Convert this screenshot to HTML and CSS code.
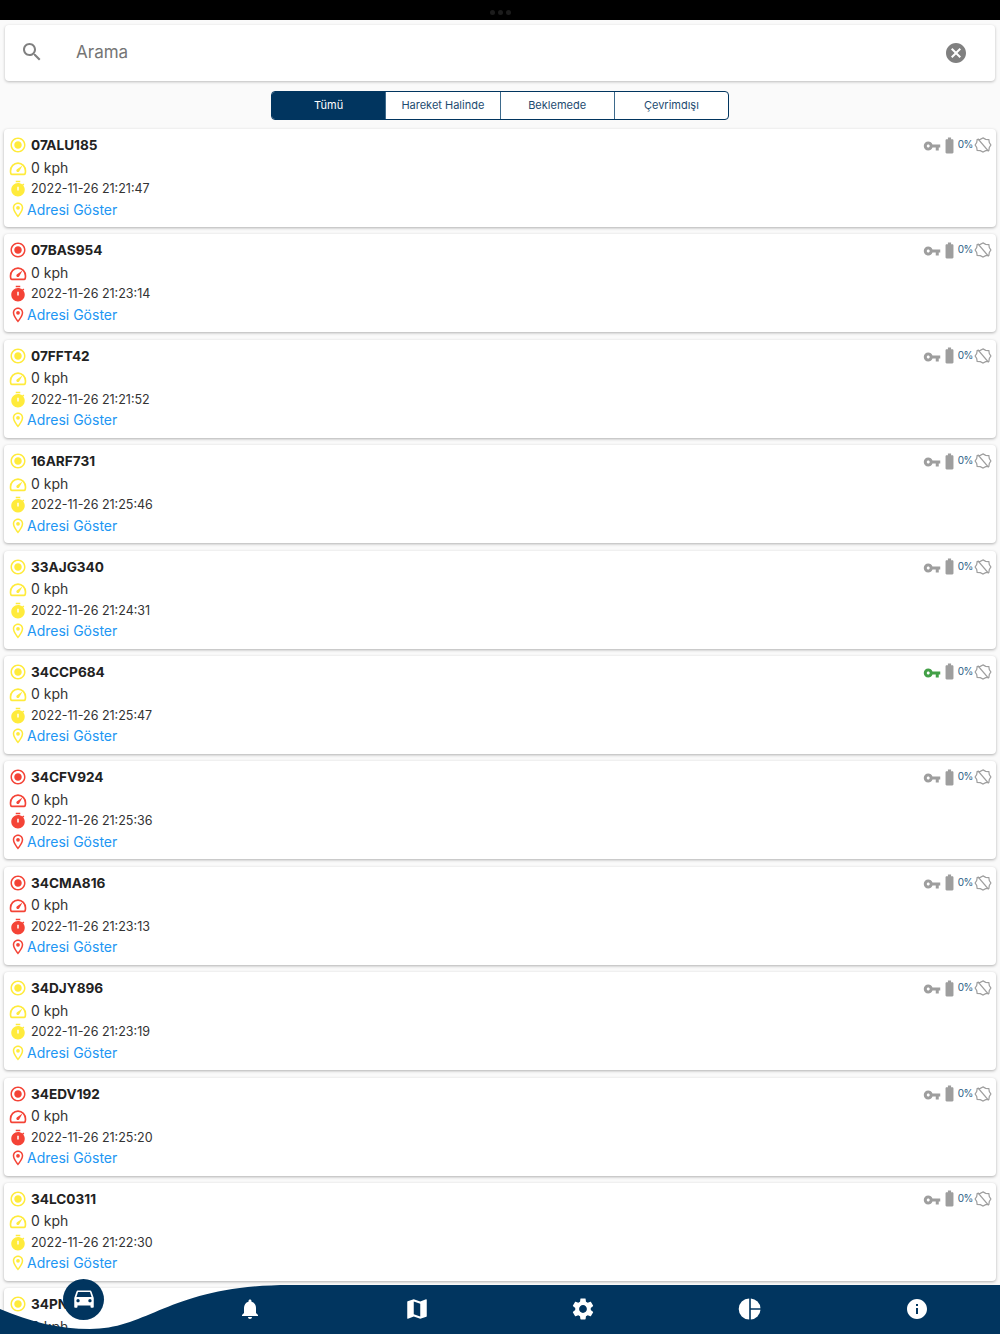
FILE: index.html
```html
<!DOCTYPE html>
<html lang="en">

<head>
    <meta charset="UTF-8">
    <meta name="viewport" content="width=device-width, initial-scale=1.0">
    <title>Araçlar</title>
    <link rel="stylesheet" href="styles.css">
</head>

<body>
    <svg class="sprite" xmlns="http://www.w3.org/2000/svg">
        <symbol id="i-search" viewBox="0 0 24 24"><path d="M15.5 14h-.79l-.28-.27C15.41 12.59 16 11.11 16 9.5 16 5.91 13.09 3 9.5 3S3 5.91 3 9.5 5.91 16 9.5 16c1.61 0 3.09-.59 4.23-1.57l.27.28v.79l5 4.99L20.49 19l-4.99-5zm-6 0C7.01 14 5 11.99 5 9.5S7.01 5 9.5 5 14 7.01 14 9.5 11.99 14 9.5 14z"/></symbol>
        <symbol id="i-cancel" viewBox="0 0 24 24"><path d="M12 2C6.47 2 2 6.47 2 12s4.47 10 10 10 10-4.47 10-10S17.53 2 12 2zm5 13.59L15.59 17 12 13.41 8.41 17 7 15.59 10.59 12 7 8.41 8.41 7 12 10.59 15.59 7 17 8.41 13.41 12 17 15.59z"/></symbol>
        <symbol id="i-status" viewBox="0 0 24 24"><path d="M12 7c-2.76 0-5 2.24-5 5s2.24 5 5 5 5-2.24 5-5-2.24-5-5-5zm0-5C6.48 2 2 6.48 2 12s4.48 10 10 10 10-4.48 10-10S17.52 2 12 2zm0 18c-4.42 0-8-3.58-8-8s3.58-8 8-8 8 3.58 8 8-3.58 8-8 8z"/></symbol>
        <symbol id="i-speed" viewBox="0 0 24 24"><path d="M4 20.500h16c.8 0 1.300-.4 1.500-1 .4-1.200.5-2.400.5-3.500 0-5.800-4.500-10.500-10-10.500S2 10.200 2 16c0 1.100.1 2.300.5 3.500.2.600.7 1 1.500 1z" fill="none" stroke="currentColor" stroke-width="2.200"/><path d="M18 8.500l-7.300 5.200c-1 .7-1.200 2-.5 2.900.7 1 2 1.100 2.900.4.300-.2.500-.5.600-.8z"/></symbol>
        <symbol id="i-timer" viewBox="0 0 24 24"><path d="M15 1H9v2h6V1z"/><path d="M19.030 7.390l1.420-1.420c-.43-.51-.9-.99-1.410-1.410l-1.420 1.420C16.070 4.740 14.120 4 12 4c-4.970 0-9 4.030-9 9s4.020 9 9 9 9-4.030 9-9c0-2.120-.74-4.070-1.970-5.610zM13 14h-2V9h2v5z"/></symbol>
        <symbol id="i-place" viewBox="0 0 24 24"><path d="M12 2C8.130 2 5 5.130 5 9c0 5.250 7 13 7 13s7-7.750 7-13c0-3.870-3.130-7-7-7zM7 9c0-2.760 2.240-5 5-5s5 2.240 5 5c0 2.880-2.880 7.190-5 9.880C9.920 16.210 7 11.850 7 9z"/><circle cx="12" cy="9" r="2.500"/></symbol>
        <symbol id="i-key" viewBox="0 0 24 24"><path d="M12.650 10C11.830 7.670 9.610 6 7 6c-3.310 0-6 2.690-6 6s2.690 6 6 6c2.610 0 4.830-1.670 5.650-4H17v4h4v-4h2v-4H12.650zM7 14c-1.100 0-2-.9-2-2s.9-2 2-2 2 .9 2 2-.9 2-2 2z"/></symbol>
        <symbol id="i-battery" viewBox="0 0 24 24"><path d="M15.670 4H14V2h-4v2H8.330C7.600 4 7 4.600 7 5.330v15.330C7 21.400 7.600 22 8.330 22h7.330c.74 0 1.340-.6 1.340-1.330V5.330C17 4.600 16.400 4 15.670 4z"/></symbol>
        <symbol id="i-off" viewBox="0 0 24 24"><path d="M12 2.500l3.600 2 4.200.3.600 4 2.100 3.200-2.100 3.400-.6 3.800-4.200.3-3.600 2-3.600-2-4.200-.3-.6-3.800L1.500 12l2.100-3.200.6-4 4.200-.3z" fill="none" stroke="currentColor" stroke-width="1.600"/><path d="M5 3.500l14.500 17" fill="none" stroke="currentColor" stroke-width="1.800"/></symbol>
        <symbol id="i-car" viewBox="0 0 24 24"><path d="M18.920 6.010C18.720 5.420 18.160 5 17.500 5h-11c-.66 0-1.210.42-1.420 1.010L3 12v8c0 .55.45 1 1 1h1c.55 0 1-.45 1-1v-1h12v1c0 .55.45 1 1 1h1c.55 0 1-.45 1-1v-8l-2.080-5.990zM6.500 16c-.83 0-1.500-.67-1.500-1.500S5.670 13 6.500 13s1.500.67 1.500 1.500S7.330 16 6.500 16zm11 0c-.83 0-1.500-.67-1.500-1.500s.67-1.500 1.500-1.500 1.500.67 1.500 1.500-.67 1.500-1.500 1.500zM5 11l1.500-4.500h11L19 11H5z"/></symbol>
        <symbol id="i-bell" viewBox="0 0 24 24"><path d="M12 22c1.100 0 2-.9 2-2h-4c0 1.100.89 2 2 2zm6-6v-5c0-3.070-1.640-5.640-4.500-6.320V4c0-.83-.67-1.500-1.500-1.500s-1.500.67-1.500 1.500v.68C7.630 5.360 6 7.920 6 11v5l-2 2v1h16v-1l-2-2z"/></symbol>
        <symbol id="i-map" viewBox="0 0 24 24"><path d="M20.500 3l-.16.03L15 5.100 9 3 3.360 4.900c-.21.07-.36.25-.36.48V20.500c0 .28.22.5.5.5l.16-.03L9 18.900l6 2.100 5.640-1.900c.21-.07.36-.25.36-.48V3.500c0-.28-.22-.5-.5-.5zM15 19l-6-2.110V5l6 2.110V19z"/></symbol>
        <symbol id="i-gear" viewBox="0 0 24 24"><path d="M19.140 12.940c.04-.3.06-.61.06-.94 0-.32-.02-.64-.07-.94l2.030-1.580c.18-.14.23-.41.12-.61l-1.920-3.320c-.12-.22-.37-.29-.59-.22l-2.390.96c-.5-.38-1.030-.7-1.620-.94l-.36-2.540c-.04-.24-.24-.41-.48-.41h-3.840c-.24 0-.43.17-.47.41l-.36 2.540c-.59.24-1.130.57-1.620.94l-2.390-.96c-.22-.08-.47 0-.59.22L2.740 8.870c-.12.21-.08.47.12.61l2.030 1.580c-.05.3-.09.63-.09.94s.02.64.07.94l-2.030 1.580c-.18.14-.23.41-.12.61l1.920 3.320c.12.22.37.29.59.22l2.390-.96c.5.38 1.030.7 1.620.94l.36 2.540c.05.24.24.41.48.41h3.840c.24 0 .44-.17.47-.41l.36-2.540c.59-.24 1.130-.56 1.620-.94l2.390.96c.22.08.47 0 .59-.22l1.920-3.320c.12-.22.07-.47-.12-.61l-2.010-1.580zM12 15.600c-1.980 0-3.600-1.620-3.600-3.600s1.620-3.600 3.600-3.600 3.600 1.620 3.600 3.600-1.620 3.600-3.600 3.600z"/></symbol>
        <symbol id="i-pie" viewBox="0 0 24 24"><path d="M11.200 1.500a10.500 10.500 0 0 0 0 21z"/><path d="M12.800 1.500a10.500 10.500 0 0 1 9.700 9.700h-9.700z"/><path d="M12.800 12.800h9.700a10.500 10.500 0 0 1-9.700 9.700z"/></symbol>
        <symbol id="i-info" viewBox="0 0 24 24"><path d="M12 2C6.480 2 2 6.480 2 12s4.480 10 10 10 10-4.480 10-10S17.520 2 12 2zm1 15h-2v-6h2v6zm0-8h-2V7h2v2z"/></symbol>
    </svg>

    <div class="top-bar"><span></span><span></span><span></span></div>

    <div class="search-box">
        <svg class="search-icon"><use href="#i-search"/></svg>
        <span class="search-text">Arama</span>
        <svg class="clear-icon"><use href="#i-cancel"/></svg>
    </div>

    <div class="tabs">
        <div class="tab active">Tümü</div>
        <div class="tab">Hareket Halinde</div>
        <div class="tab">Beklemede</div>
        <div class="tab">Çevrimdışı</div>
    </div>

    <div class="list">
        <div class="card idle">
            <div class="info">
                <div class="row name"><svg class="ico"><use href="#i-status"/></svg>07ALU185</div>
                <div class="row speed"><svg class="ico"><use href="#i-speed"/></svg>0 kph</div>
                <div class="row time"><svg class="ico"><use href="#i-timer"/></svg>2022-11-26 21:21:47</div>
                <div class="row addr"><svg class="pin"><use href="#i-place"/></svg>Adresi Göster</div>
            </div>
            <div class="state"><svg class="key"><use href="#i-key"/></svg><svg class="bat"><use href="#i-battery"/></svg><span class="pct">0%</span><svg class="off"><use href="#i-off"/></svg></div>
        </div>
        <div class="card stopped">
            <div class="info">
                <div class="row name"><svg class="ico"><use href="#i-status"/></svg>07BAS954</div>
                <div class="row speed"><svg class="ico"><use href="#i-speed"/></svg>0 kph</div>
                <div class="row time"><svg class="ico"><use href="#i-timer"/></svg>2022-11-26 21:23:14</div>
                <div class="row addr"><svg class="pin"><use href="#i-place"/></svg>Adresi Göster</div>
            </div>
            <div class="state"><svg class="key"><use href="#i-key"/></svg><svg class="bat"><use href="#i-battery"/></svg><span class="pct">0%</span><svg class="off"><use href="#i-off"/></svg></div>
        </div>
        <div class="card idle">
            <div class="info">
                <div class="row name"><svg class="ico"><use href="#i-status"/></svg>07FFT42</div>
                <div class="row speed"><svg class="ico"><use href="#i-speed"/></svg>0 kph</div>
                <div class="row time"><svg class="ico"><use href="#i-timer"/></svg>2022-11-26 21:21:52</div>
                <div class="row addr"><svg class="pin"><use href="#i-place"/></svg>Adresi Göster</div>
            </div>
            <div class="state"><svg class="key"><use href="#i-key"/></svg><svg class="bat"><use href="#i-battery"/></svg><span class="pct">0%</span><svg class="off"><use href="#i-off"/></svg></div>
        </div>
        <div class="card idle">
            <div class="info">
                <div class="row name"><svg class="ico"><use href="#i-status"/></svg>16ARF731</div>
                <div class="row speed"><svg class="ico"><use href="#i-speed"/></svg>0 kph</div>
                <div class="row time"><svg class="ico"><use href="#i-timer"/></svg>2022-11-26 21:25:46</div>
                <div class="row addr"><svg class="pin"><use href="#i-place"/></svg>Adresi Göster</div>
            </div>
            <div class="state"><svg class="key"><use href="#i-key"/></svg><svg class="bat"><use href="#i-battery"/></svg><span class="pct">0%</span><svg class="off"><use href="#i-off"/></svg></div>
        </div>
        <div class="card idle">
            <div class="info">
                <div class="row name"><svg class="ico"><use href="#i-status"/></svg>33AJG340</div>
                <div class="row speed"><svg class="ico"><use href="#i-speed"/></svg>0 kph</div>
                <div class="row time"><svg class="ico"><use href="#i-timer"/></svg>2022-11-26 21:24:31</div>
                <div class="row addr"><svg class="pin"><use href="#i-place"/></svg>Adresi Göster</div>
            </div>
            <div class="state"><svg class="key"><use href="#i-key"/></svg><svg class="bat"><use href="#i-battery"/></svg><span class="pct">0%</span><svg class="off"><use href="#i-off"/></svg></div>
        </div>
        <div class="card idle">
            <div class="info">
                <div class="row name"><svg class="ico"><use href="#i-status"/></svg>34CCP684</div>
                <div class="row speed"><svg class="ico"><use href="#i-speed"/></svg>0 kph</div>
                <div class="row time"><svg class="ico"><use href="#i-timer"/></svg>2022-11-26 21:25:47</div>
                <div class="row addr"><svg class="pin"><use href="#i-place"/></svg>Adresi Göster</div>
            </div>
            <div class="state"><svg class="key on"><use href="#i-key"/></svg><svg class="bat"><use href="#i-battery"/></svg><span class="pct">0%</span><svg class="off"><use href="#i-off"/></svg></div>
        </div>
        <div class="card stopped">
            <div class="info">
                <div class="row name"><svg class="ico"><use href="#i-status"/></svg>34CFV924</div>
                <div class="row speed"><svg class="ico"><use href="#i-speed"/></svg>0 kph</div>
                <div class="row time"><svg class="ico"><use href="#i-timer"/></svg>2022-11-26 21:25:36</div>
                <div class="row addr"><svg class="pin"><use href="#i-place"/></svg>Adresi Göster</div>
            </div>
            <div class="state"><svg class="key"><use href="#i-key"/></svg><svg class="bat"><use href="#i-battery"/></svg><span class="pct">0%</span><svg class="off"><use href="#i-off"/></svg></div>
        </div>
        <div class="card stopped">
            <div class="info">
                <div class="row name"><svg class="ico"><use href="#i-status"/></svg>34CMA816</div>
                <div class="row speed"><svg class="ico"><use href="#i-speed"/></svg>0 kph</div>
                <div class="row time"><svg class="ico"><use href="#i-timer"/></svg>2022-11-26 21:23:13</div>
                <div class="row addr"><svg class="pin"><use href="#i-place"/></svg>Adresi Göster</div>
            </div>
            <div class="state"><svg class="key"><use href="#i-key"/></svg><svg class="bat"><use href="#i-battery"/></svg><span class="pct">0%</span><svg class="off"><use href="#i-off"/></svg></div>
        </div>
        <div class="card idle">
            <div class="info">
                <div class="row name"><svg class="ico"><use href="#i-status"/></svg>34DJY896</div>
                <div class="row speed"><svg class="ico"><use href="#i-speed"/></svg>0 kph</div>
                <div class="row time"><svg class="ico"><use href="#i-timer"/></svg>2022-11-26 21:23:19</div>
                <div class="row addr"><svg class="pin"><use href="#i-place"/></svg>Adresi Göster</div>
            </div>
            <div class="state"><svg class="key"><use href="#i-key"/></svg><svg class="bat"><use href="#i-battery"/></svg><span class="pct">0%</span><svg class="off"><use href="#i-off"/></svg></div>
        </div>
        <div class="card stopped">
            <div class="info">
                <div class="row name"><svg class="ico"><use href="#i-status"/></svg>34EDV192</div>
                <div class="row speed"><svg class="ico"><use href="#i-speed"/></svg>0 kph</div>
                <div class="row time"><svg class="ico"><use href="#i-timer"/></svg>2022-11-26 21:25:20</div>
                <div class="row addr"><svg class="pin"><use href="#i-place"/></svg>Adresi Göster</div>
            </div>
            <div class="state"><svg class="key"><use href="#i-key"/></svg><svg class="bat"><use href="#i-battery"/></svg><span class="pct">0%</span><svg class="off"><use href="#i-off"/></svg></div>
        </div>
        <div class="card idle">
            <div class="info">
                <div class="row name"><svg class="ico"><use href="#i-status"/></svg>34LC0311</div>
                <div class="row speed"><svg class="ico"><use href="#i-speed"/></svg>0 kph</div>
                <div class="row time"><svg class="ico"><use href="#i-timer"/></svg>2022-11-26 21:22:30</div>
                <div class="row addr"><svg class="pin"><use href="#i-place"/></svg>Adresi Göster</div>
            </div>
            <div class="state"><svg class="key"><use href="#i-key"/></svg><svg class="bat"><use href="#i-battery"/></svg><span class="pct">0%</span><svg class="off"><use href="#i-off"/></svg></div>
        </div>
        <div class="card idle">
            <div class="info">
                <div class="row name"><svg class="ico"><use href="#i-status"/></svg>34PN</div>
                <div class="row speed"><svg class="ico"><use href="#i-speed"/></svg>0 kph</div>
            </div>
        </div>
    </div>

    <nav class="bottom-nav">
        <svg class="wave" viewBox="0 0 1000 49" preserveAspectRatio="none">
            <path d="M0 24C30 37 60 44 90 44C150 44 170 0 290 0L1000 0L1000 49L0 49Z"/>
        </svg>
        <div class="fab"><svg><use href="#i-car"/></svg></div>
        <div class="nav-icons">
            <span></span>
            <svg class="nav-bell"><use href="#i-bell"/></svg>
            <svg class="nav-map"><use href="#i-map"/></svg>
            <svg class="nav-gear"><use href="#i-gear"/></svg>
            <svg class="nav-pie"><use href="#i-pie"/></svg>
            <svg class="nav-info"><use href="#i-info"/></svg>
        </div>
    </nav>
</body>

</html>
```

FILE: styles.css
```css
html, body {
    height: 100%;
}

body {
    margin: 0;
    width: 1000px;
    height: 1334px;
    overflow: hidden;
    position: relative;
    background-color: #fafafa;
    font-family: Inter, "Open Sans", sans-serif;
    color: #222;
}

.sprite {
    display: none;
}

.top-bar {
    height: 20px;
    padding-top: 4px;
    box-sizing: border-box;
    background-color: #000;
    display: flex;
    justify-content: center;
    align-items: center;
    gap: 3px;
}

.top-bar span {
    width: 5px;
    height: 5px;
    border-radius: 50%;
    background-color: #1c1c1c;
}

.search-box {
    margin: 5px 5px 0;
    height: 56px;
    background-color: #fff;
    border-radius: 4px;
    box-shadow: 0 1px 3px rgba(0, 0, 0, 0.25);
    display: flex;
    align-items: center;
    padding: 0 27px 0 15px;
}

.search-icon {
    width: 24px;
    height: 24px;
    fill: #808080;
    margin-top: -3px;
}

.search-text {
    margin-left: 32px;
    margin-top: -2px;
    font-size: 17px;
    color: #757575;
    flex: 1;
}

.clear-icon {
    width: 24px;
    height: 24px;
    fill: #808080;
}

.tabs {
    margin: 10px auto 0;
    width: 458px;
    height: 29px;
    box-sizing: border-box;
    display: flex;
    border: 1px solid #01355f;
    border-radius: 4px;
    overflow: hidden;
    background-color: #fff;
}

.tab {
    flex: 1;
    display: flex;
    justify-content: center;
    align-items: center;
    padding-bottom: 2px;
    font-size: 11px;
    color: #1d4b70;
    border-left: 1px solid #3d6a8c;
}

.tab:first-child {
    border-left: none;
}

.tab.active {
    background-color: #01355f;
    color: #fff;
}

.list {
    margin: 9px 4px 0;
    display: flex;
    flex-direction: column;
    gap: 7.4px;
}

.card {
    flex: none;
    height: 98px;
    box-sizing: border-box;
    padding: 5px 4.5px 0 5px;
    background-color: #fff;
    border-radius: 4px;
    box-shadow: 0 1px 3px rgba(0, 0, 0, 0.3);
    display: flex;
    justify-content: space-between;
}

.card.idle {
    --status: #ffeb3b;
}

.card.stopped {
    --status: #f44336;
}

.row {
    display: flex;
    align-items: center;
    font-size: 14px;
    line-height: 20px;
    color: #333;
}

.ico {
    width: 18px;
    height: 18px;
    fill: var(--status);
    color: var(--status);
    margin-right: 4px;
    flex: none;
}

.name {
    height: 22px;
    font-size: 13.6px;
    font-weight: 700;
    color: #222;
}

.speed {
    height: 23px;
}

.time {
    height: 20px;
    font-size: 12.5px;
}

.addr {
    height: 21px;
    color: #2196f3;
}

.pin {
    width: 18px;
    height: 18px;
    fill: var(--status);
}

.state {
    display: flex;
    align-items: center;
    height: 22px;
}

.key {
    width: 18px;
    height: 18px;
    fill: #9e9e9e;
    margin: 2px -1px 0 0;
}

.key.on {
    fill: #43a047;
}

.bat {
    width: 19px;
    height: 19px;
    fill: #9e9e9e;
}

.pct {
    font-size: 10px;
    letter-spacing: -0.4px;
    color: #2b5d85;
    margin: -2px 0.5px 0 -1px;
}

.off {
    width: 18px;
    height: 18px;
    fill: #9e9e9e;
    color: #9e9e9e;
}

.bottom-nav {
    position: absolute;
    left: 0;
    right: 0;
    bottom: 0;
    height: 49px;
}

.wave {
    position: absolute;
    inset: 0;
    width: 100%;
    height: 100%;
    fill: #01355f;
}

.fab {
    position: absolute;
    left: 63px;
    top: -6px;
    width: 41px;
    height: 41px;
    border-radius: 50%;
    background-color: #01355f;
    display: flex;
    justify-content: center;
    align-items: center;
}

.fab svg {
    width: 26px;
    height: 26px;
    fill: #fff;
    margin-bottom: 3px;
}

.nav-icons {
    position: relative;
    height: 100%;
    padding-bottom: 1px;
    box-sizing: border-box;
    display: grid;
    grid-template-columns: repeat(6, 166.67px);
    align-items: center;
}

.nav-icons svg {
    width: 24px;
    height: 24px;
    fill: #fff;
    justify-self: center;
}

.nav-icons .nav-map,
.nav-icons .nav-gear {
    width: 26px;
    height: 26px;
}
```
